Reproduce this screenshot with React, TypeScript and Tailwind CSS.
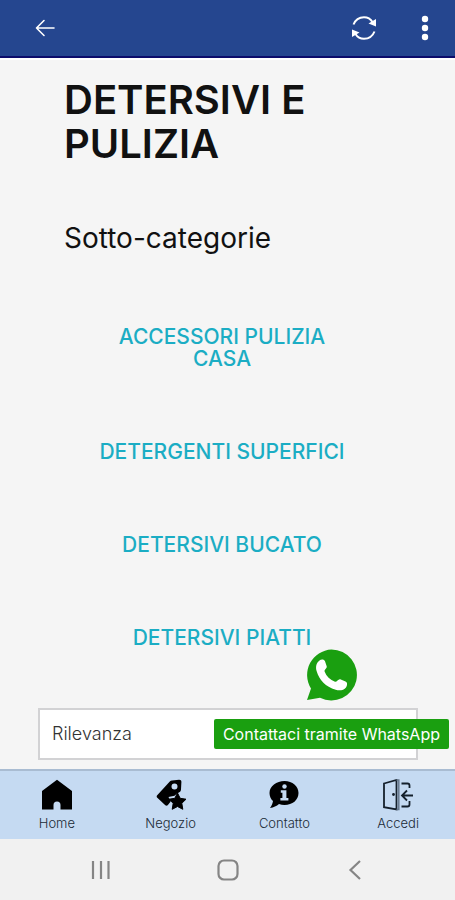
import React from 'react'

const categories = [
  'ACCESSORI PULIZIA CASA',
  'DETERGENTI SUPERFICI',
  'DETERSIVI BUCATO',
  'DETERSIVI PIATTI',
]

function BackArrowIcon() {
  return (
    <svg width="20" height="18" viewBox="0 0 20 18" fill="none" stroke="white" strokeWidth="1.6" strokeLinecap="round" strokeLinejoin="round">
      <path d="M19 9H1.5M9 1.5 1.5 9l7.500 7.500" />
    </svg>
  )
}

function RefreshIcon() {
  return (
    <svg width="26" height="26" viewBox="0 0 26 26" fill="none" stroke="white" strokeWidth="2">
      <path d="M2.500 9.500C4.500 4.500 8.500 2.200 13 2.200c3.800 0 6.500 1.500 8.500 4.800" />
      <path d="M23.500 16.500c-2 5-6 7.300-10.500 7.300-3.800 0-6.500-1.500-8.500-4.800" />
      <path d="M25 4v7.500l-7.500-3z" fill="white" stroke="none" />
      <path d="M1 22v-7.500l7.500 3z" fill="white" stroke="none" />
    </svg>
  )
}

function DotsIcon() {
  return (
    <svg width="8" height="26" viewBox="0 0 8 26" fill="white">
      <circle cx="4" cy="4" r="3.200" />
      <circle cx="4" cy="13" r="3.200" />
      <circle cx="4" cy="22" r="3.200" />
    </svg>
  )
}

function WhatsAppIcon() {
  return (
    <svg width="52" height="52" viewBox="0 0 52 52">
      <path d="M26.500 0.500a25.500 25.500 0 1 1-11.500 48.300L2 51l4-11.500A25.500 25.500 0 0 1 26.500 0.500z" fill="#1a9f10" />
      <path
        d="M14.500 11.500c1.500-1.200 4.600-1.400 5.500.8l1.700 5c.6 1.900-2.700 3.500-2.100 5.200 1.800 4.800 5.500 8.500 10.400 10.300 1.700.6 3.300-3.200 5.200-2.600l5.300 2.200c2.300 1 1.800 4.200.5 6-2 2.700-6.300 3.700-10.300 2.400C20.500 37.600 14.500 31.500 11.600 22c-1.200-4-.3-8.300 2.900-10.500z"
        fill="white"
      />
    </svg>
  )
}

function HomeIcon() {
  return (
    <svg width="32" height="32" viewBox="0 0 32 32">
      <path d="M16 .8 31 12V30.500H19.500V26a3.500 3.500 0 0 0-7 0v4.500H1V12z" />
    </svg>
  )
}

function TagStarIcon() {
  return (
    <svg width="32" height="32" viewBox="0 0 32 32">
      <path
        fillRule="evenodd"
        d="M17 1.500 24 .8c1.500-.1 2.500.8 2.400 2.300l-.4 7.500c0 .8-.4 1.500-.9 2.100l-3.300 2-2.300 2-6 1.200 2.200 4.500-3 3.800c-.8.6-1.700.6-2.400 0l-8-7.500c-.8-.8-.8-1.700-.1-2.500L14.800 2.600c.6-.6 1.300-1 2.200-1.100zM19.500 4.500a3 3 0 1 0 0 6 3 3 0 0 0 0-6z"
      />
      <path
        d="m22.500 14 2.700 5.300 5.800.9-4.200 4.100 1 6-5.300-2.800-5.300 2.800 1-6-4.200-4.100 5.800-.9z"
        strokeLinejoin="round"
        stroke="black"
        strokeWidth="1"
      />
    </svg>
  )
}

function InfoBubbleIcon() {
  return (
    <svg width="32" height="32" viewBox="0 0 32 32">
      <path d="M16.500 2C24.500 2 30.500 7 30.500 14S24.500 26 16.500 26c-2 0-3.800-.3-5.500-.9-2.400 2-5.300 3.600-9 4 1.800-2.200 2.600-4.600 3-7C2.800 20 1.500 17.200 1.500 14c0-7 7-12 15-12z" />
      <circle cx="16.500" cy="7.500" r="2.200" fill="#c5daf2" />
      <path d="M12.800 11.200h5.600v7.800h2v2.600h-8v-2.600h2v-5.200h-1.600z" fill="#c5daf2" />
    </svg>
  )
}

function LoginDoorIcon() {
  return (
    <svg width="32" height="32" viewBox="0 0 32 32" fill="none" stroke="#15202c" strokeWidth="1.800">
      <path d="M2 4.500 14.500 1v29.500L2 28.200z" />
      <path d="M14.500 1h2.300v29.500h-2.300" stroke="#66798e" strokeWidth="1.500" />
      <path d="M19.500 4.500h6c1.300 0 2 .8 2 2V9M19.500 27.500h6c1.300 0 2-.8 2-2V22" />
      <path d="M31 16.500H21M25 11.500l-5 5 5 5" />
      <circle cx="11.500" cy="15.500" r="1.400" fill="#15202c" stroke="none" />
    </svg>
  )
}

const tabs = [
  { label: 'Home', icon: <HomeIcon /> },
  { label: 'Negozio', icon: <TagStarIcon /> },
  { label: 'Contatto', icon: <InfoBubbleIcon /> },
  { label: 'Accedi', icon: <LoginDoorIcon /> },
]

function TopBar() {
  return (
    <header className="flex h-[58px] items-center gap-11 border-b-2 border-[#0c0c6b] bg-[#25468f] pr-[26px] pl-[35px]">
      <button type="button" aria-label="Indietro" className="mr-auto">
        <BackArrowIcon />
      </button>
      <button type="button" aria-label="Aggiorna">
        <RefreshIcon />
      </button>
      <button type="button" aria-label="Menu">
        <DotsIcon />
      </button>
    </header>
  )
}

export default function App() {
  return (
    <div className="flex min-h-screen flex-col bg-[#f5f5f5] font-['Inter','Noto_Sans',sans-serif] text-[#111111]">
      <TopBar />

      <main className="relative flex-1 border-t-2 border-white pt-[18px] pb-[9px]">
        <h1 className="px-16 text-[40px] leading-[44px] font-semibold">DETERSIVI E PULIZIA</h1>
        <h2 className="mt-14 px-16 text-[28px] leading-8">Sotto-categorie</h2>

        <ul className="mt-[72px] flex flex-col gap-[71px] pr-[103px] pl-[92px] text-center text-[21px] leading-[22px] font-medium text-[#1badc4]">
          {categories.map((name) => (
            <li key={name}>
              <a href="#">{name}</a>
            </li>
          ))}
        </ul>

        <div className="mt-[59px] pr-[37px] pl-[38px]">
          <select
            aria-label="Ordina per"
            className="block h-[52px] w-full appearance-none border-2 border-[#d2d2d4] bg-white px-3 text-lg font-light text-[#333333]"
          >
            <option>Rilevanza</option>
          </select>
        </div>

        {/* Contatto WhatsApp flottante */}
        <a href="#" className="absolute right-[6px] bottom-5 flex flex-col items-center gap-[18px]">
          <WhatsAppIcon />
          <span className="rounded-xs bg-[#1a9f10] px-[9px] text-base leading-[30px] whitespace-nowrap text-white">
            Contattaci tramite WhatsApp
          </span>
        </a>
      </main>

      <nav className="grid h-[70px] grid-cols-4 border-t-2 border-[#a9bcd2] bg-[#c5daf2]">
        {tabs.map((tab) => (
          <a key={tab.label} href="#" className="flex flex-col items-center pt-2 text-[13px] leading-6 font-light text-[#202a36]">
            {tab.icon}
            {tab.label}
          </a>
        ))}
      </nav>

      {/* Barra di sistema */}
      <footer className="flex h-[61px] items-center justify-between bg-[#f1f1f1] px-[90px]">
        <button type="button" aria-label="Recenti">
          <svg width="22" height="22" viewBox="0 0 22 22" stroke="#858585" strokeWidth="2.200">
            <path d="M3 2v18M11 2v18M18.500 2v18" />
          </svg>
        </button>
        <button type="button" aria-label="Schermata principale">
          <svg width="22" height="22" viewBox="0 0 22 22" fill="none" stroke="#858585" strokeWidth="2.200">
            <rect x="1.500" y="1.500" width="19" height="19" rx="5.500" />
          </svg>
        </button>
        <button type="button" aria-label="Torna indietro">
          <svg width="22" height="22" viewBox="0 0 22 22" fill="none" stroke="#858585" strokeWidth="2.200">
            <path d="M17 2 7.500 11l9.500 9" />
          </svg>
        </button>
      </footer>
    </div>
  )
}
